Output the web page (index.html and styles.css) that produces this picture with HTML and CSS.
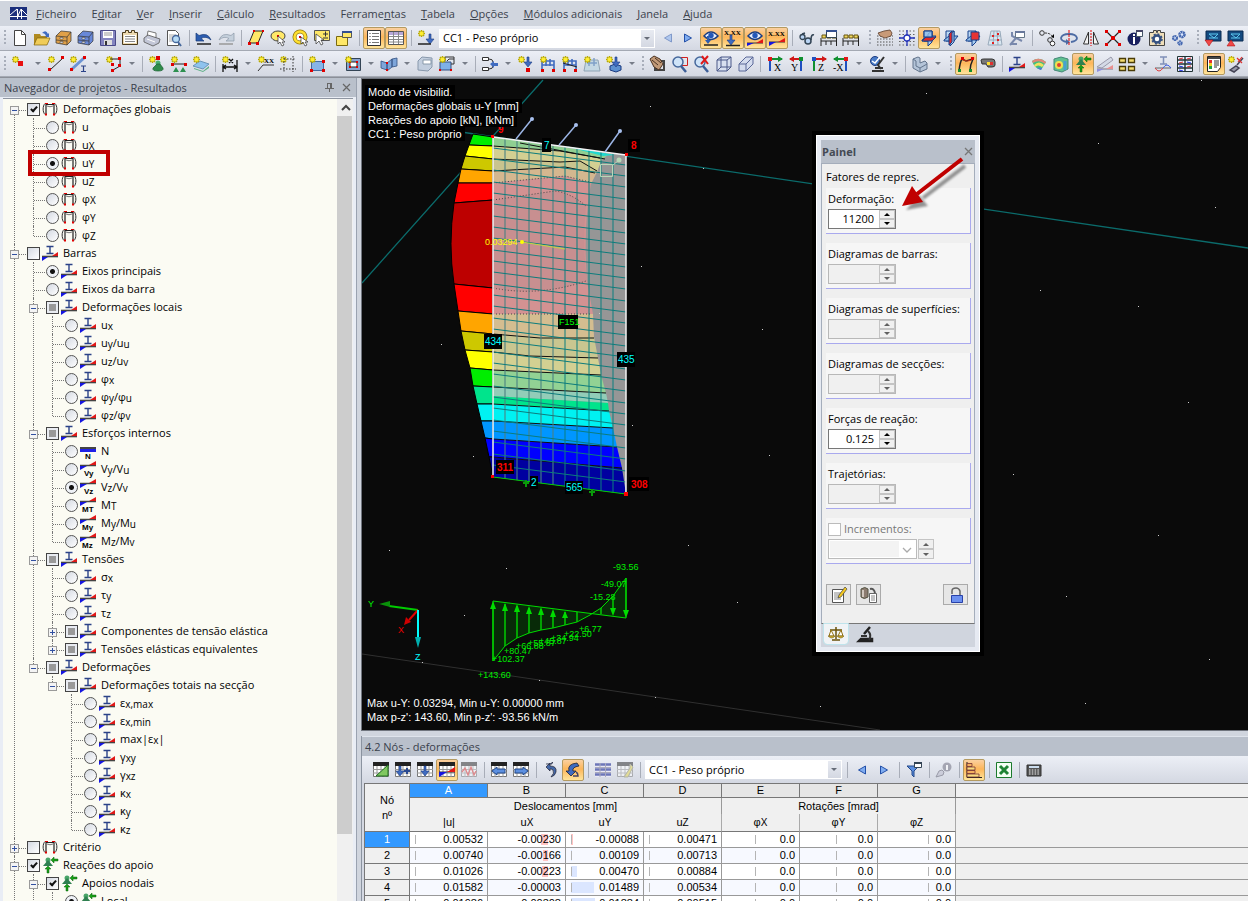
FILE: index.html
```html
<!DOCTYPE html>
<html lang="pt">
<head>
<meta charset="utf-8">
<title>Navegador de projetos - Resultados</title>
<link rel="stylesheet" href="styles.css">
</head>
<body>
<svg class="defs" aria-hidden="true">
<defs>
<g id="star"><path d="M3.500 0v7M0 3.500h7M1 1l5 5M6 1L1 6" stroke="#b8a800" stroke-width="1.500"/><circle cx="3.500" cy="3.500" r="2" fill="#ffee30"/></g>
<g id="down"><path d="M-1 0h2v5h3l-4 5-4-5h3z" fill="#3f6bc0" stroke="#1b3a80" stroke-width=".6"/></g>
<g id="frame"><path d="M4 14V3.500h8V14" fill="none" stroke="#222" stroke-width="1.200"/><path d="M3 2.500C.5 5 .5 11 3 13.500M13 2.500c2.500 2.500 2.500 8.500 0 11" fill="none" stroke="#333"/><path d="M5 5q3 1.500 6 0" fill="none" stroke="#777"/><path d="M3 2h3v1H3zM10 2h3v1h-3zM3 12.500h2v2H3zM11 12.500h2v2h-2z" fill="#e00000"/></g>
<g id="beam"><path d="M4.500 1.500h7M4.500 8.500h7M8 1.500v7" stroke="#2b4288" stroke-width="1.400"/><path d="M0 11.500h16" stroke="#444" stroke-width="1.600"/><path d="M10 11l6-4v4z" fill="#e01818"/><path d="M0 12v4l6-4z" fill="#1515e0"/></g>
<g id="force"><path d="M0 4.500h16" stroke="#444" stroke-width="1.500"/><path d="M9 4l7-4v4z" fill="#e01818"/><path d="M0 5v4l7-4z" fill="#1515e0"/></g>
<g id="supp"><circle cx="6" cy="3" r="2.500" fill="#48a468"/><path d="M6 3l5 6H1z" fill="#2f8050"/><path d="M9 3l3-3v2h4v2h-4v2zM6 9l3 3H7v4H5v-4H3z" fill="#18a018" stroke="#0a600a" stroke-width=".5"/></g>
<g id="grid"><path d="M.5 .5h15v14H.5z" fill="#fff" stroke="#777"/><path d="M0 0h16v4H0z" fill="#222"/><path d="M0 7.500h16M0 11h16M4 4v11M8 4v11M12 4v11" stroke="#999"/></g>
<g id="planes"><path d="M3 1h8v10H3z" fill="#bcd8f4" stroke="#17408c"/><path d="M1 10l5-4h9l-4 5H1z" fill="#8fbde8" stroke="#17408c"/><path d="M7 4l4-3v11l-4 4z" fill="#a8cdf0" stroke="#17408c"/></g>
<g id="cyl"><path d="M0 6l5-5 10 1v9l-4 4-11-2z" fill="currentColor" stroke="#333" stroke-width=".7"/><path d="M0 6l11 1v8M11 7l4-5M0 10l11 1" fill="none" stroke="#333" stroke-width=".7"/><path d="M4 7.500h3v1.500H4zM4 11.500h3V13H4z" fill="#fff" stroke="#333" stroke-width=".5"/></g>
<g id="load"><path d="M2 14V5h12v9M2 9h12M6 3v7M10 3v7" fill="none" stroke="#3f6bc0" stroke-width="1.600"/><path d="M1 13h3v3H1zM12 13h3v3h-3z" fill="#e00000"/></g>
<g id="eye"><path d="M1 6q7-8 14 0-7 7-14 0z" fill="#e8f0ff" stroke="#1d3f80" stroke-width="1.500"/><circle cx="8" cy="5.500" r="2.700" fill="#2458b8"/></g>
<g id="prev"><path d="M11.500 4v8L4.500 8z" fill="#7facf0" stroke="#2350a8"/></g>
<g id="next"><path d="M4.500 4v8l7-4z" fill="#7facf0" stroke="#2350a8"/></g>
<g id="film"><path d="M0 8v8M15.500 6v10M0 11h16M5 11v4M10 11v4" stroke="#222"/><path d="M1 5h4v3H1zM6 5h4v3H6zM11 5h4v3h-4z" fill="#f0d860" stroke="#665510"/></g>
</defs>
</svg>

<nav class="menubar">
<svg class="logo" aria-hidden="true"><path d="M0 0h17v13H0z" fill="#1c2f7c"/><path d="M0 9.500h17M7.500 2v10M11.500 2v10M0 8l7-6 1 7M8 9l3-7 6 6" fill="none" stroke="#fff"/></svg>
<a href="#"><u>F</u>icheiro</a><a href="#">E<u>d</u>itar</a><a href="#"><u>V</u>er</a><a href="#"><u>I</u>nserir</a><a href="#"><u>C</u>álculo</a><a href="#"><u>R</u>esultados</a><a href="#">Ferrame<u>n</u>tas</a><a href="#"><u>T</u>abela</a><a href="#"><u>O</u>pções</a><a href="#"><u>M</u>ódulos adicionais</a><a href="#"><u>J</u>anela</a><a href="#"><u>A</u>juda</a>
</nav>

<div class="toolrow wide">
<div class="bar">
<button class="t" aria-label="Novo"><svg><path d="M2.500 .5h7l4 4v11h-11z" fill="#fff" stroke="#444"/><path d="M9.500 .5v4h4" fill="none" stroke="#444"/></svg></button>
<button class="t" aria-label="Abrir"><svg><path d="M0 15V4h6l1 2h6v9z" fill="#b08a20"/><path d="M0 15l3-7h13l-3 7z" fill="#f0cc58" stroke="#80620c" stroke-width=".7"/><path d="M8 3q4-4 6 1l1-1v4h-4l1-1q-1-3-4-3z" fill="#3f6bc0"/></svg></button>
<button class="t" aria-label="Projetos"><svg style="color:#e0a048"><use href="#cyl"/></svg></button>
<button class="t" aria-label="Blocos"><svg style="color:#6888d8"><use href="#cyl"/></svg></button>
<button class="t" aria-label="Guardar"><svg><path d="M.5 .5h15v15H.5z" fill="#8485c0" stroke="#4a4a88"/><path d="M3 1h10v7H3z" fill="#fff"/><path d="M4 3h8M4 5h8" stroke="#999"/><path d="M4 10h8v5H4z" fill="#ddd"/><path d="M5 11h2v4H5z" fill="#333"/></svg></button>
<button class="t" aria-label="Relatório"><svg><path d="M.5 2.500h3v-2h3v2h3v-2h3v2h3v12H.5z" fill="#ecd9b0" stroke="#4a3a1c"/><path d="M2 5h12v8H2z" fill="#fff"/><path d="M3 6.500h10M3 9h10M3 11.500h10" stroke="#888"/></svg></button>
<button class="t" aria-label="Imprimir"><svg><path d="M3 7l1-6 8 2v5z" fill="#fff" stroke="#777"/><path d="M0 8l4-3 12 4-1 4-6 3-9-4z" fill="#c2c6d6" stroke="#555" stroke-width=".8"/><path d="M3 9l8 3" stroke="#fff"/></svg></button>
<button class="t" aria-label="Pré-visualizar"><svg><path d="M1.500 .5h8l3 3v12h-11z" fill="#fff" stroke="#555"/><path d="M3 5h7M3 7h7M3 9h4M3 11h4" stroke="#aaa"/><circle cx="10" cy="9" r="3.500" fill="#b8dcf6" stroke="#46689c" stroke-width="1.300"/><path d="M12 12l3 4" stroke="#46689c" stroke-width="2"/></svg></button>
<i class="sep"></i>
<button class="t" aria-label="Anular"><svg><path d="M0 3v8h8L5 8.500q5-3 10 1.500Q12 2 3 5.500z" fill="#2c5db0" stroke="#173a78" stroke-width=".7"/><path d="M1 14h14" stroke="#222" stroke-width="1.500"/></svg></button>
<button class="t" aria-label="Refazer"><svg><path d="M16 3v8H8l3-2.500Q6 5.500 1 10 4 2 13 5.500z" fill="#c5d0dc" stroke="#8b98a8" stroke-width=".7"/><path d="M1 14h14" stroke="#999" stroke-width="1.500"/></svg></button>
<i class="sep"></i>
<button class="t" aria-label="Polígono"><svg><path d="M6 1h9l-5 12H1z" fill="#ffe868" stroke="#222"/><path d="M5 0h2v2H5zM14 0h2v2h-2zM0 12h3v3H0zM8 12h3v3H8z" fill="#e00000"/></svg></button>
<button class="t" aria-label="Elipse"><svg><ellipse cx="8" cy="6" rx="7" ry="5" fill="#ffe868" stroke="#444"/><path d="M7 5h2v2H7z" fill="#e00000"/><path d="M8 6v8l2-2 2 4 2-1-2-3h3z" fill="#fff" stroke="#333" stroke-width=".7"/></svg></button>
<button class="t" aria-label="Anel"><svg><circle cx="8" cy="7" r="5.500" fill="#fff" stroke="#907810" stroke-width="4"/><circle cx="8" cy="7" r="5.500" fill="none" stroke="#ffe030" stroke-width="2.500"/><path d="M7 6h2v2H7z" fill="#e00000"/><path d="M9 7v7l2-2 2 4 2-1-2-3h3z" fill="#fff" stroke="#333" stroke-width=".7"/></svg></button>
<button class="t" aria-label="Seleção"><svg><path d="M.5 .5h15v10H.5z" fill="#ffe868" stroke="#555"/><path d="M9 4h5M11.500 1.500v5M9 8h5" stroke="#333"/><path d="M2 4v10l3-3 2 4 2-1-2-4h3z" fill="#fff" stroke="#333" stroke-width=".7"/></svg></button>
<button class="t" aria-label="Nova janela"><svg><path d="M.5 6.500h11v9H.5z" fill="#ffe868" stroke="#7a6a10"/><path d="M6.500 1.500h9v6h-9z" fill="#ffe868" stroke="#555"/><path d="M6 1h10v2H6z" fill="#334f90"/></svg></button>
<i class="sep"></i>
<button class="t on" aria-label="Navegador"><svg><path d="M1.500 .5h13v15h-13z" fill="#fff" stroke="#333"/><path d="M6 3.500h7M6 6.500h7M6 9.500h7M6 12.500h7" stroke="#777"/><path d="M4 3v11" stroke="#333" stroke-dasharray="1 2"/></svg></button>
<button class="t on" aria-label="Tabelas"><svg><path d="M.5 1.500h15v13H.5z" fill="#fff" stroke="#555"/><path d="M1 2h14v3H1z" fill="#b8a8d8"/><path d="M1 6.500h14M1 9.500h14M1 12h14M5.500 2v12M10.500 2v12" stroke="#888"/></svg></button>
<i class="sep"></i>
<button class="t" aria-label="Novo caso de carga"><svg><use href="#star"/><use href="#down" x="12" y="4"/><path d="M0 14h13" stroke="#222" stroke-width="1.500"/></svg></button>
<span class="combo top"><select aria-label="Caso de carga"><option>CC1 - Peso próprio</option></select></span>
<button class="t slim faded" aria-label="Anterior"><svg><use href="#prev"/></svg></button>
<button class="t slim" aria-label="Seguinte"><svg><use href="#next"/></svg></button>
<i class="gap2"></i>
<button class="t on" aria-label="Mostrar cargas"><svg><use href="#eye"/><path d="M4 6v4H2l3 4 3-4H6V6" fill="#2c5db0"/><path d="M1 15h14" stroke="#222" stroke-width="1.500"/></svg></button>
<button class="t on" aria-label="Valores das cargas"><svg><text x="-1" y="5" class="ti">X.XX</text><use href="#down" x="6" y="5"/><path d="M1 15.500h14" stroke="#222" stroke-width="1.500"/></svg></button>
<button class="t on" aria-label="Mostrar resultados"><svg><use href="#eye"/><path d="M0 13h16" stroke="#333"/><path d="M9 13l7-4v4z" fill="#e01818"/><path d="M0 13v3l7-3z" fill="#1515e0"/></svg></button>
<button class="t on" aria-label="Valores dos resultados"><svg><text x="-1" y="6" class="ti">X.XX</text><path d="M0 12h16" stroke="#333"/><path d="M9 12l7-4v4z" fill="#e01818"/><path d="M0 12v4l7-4z" fill="#1515e0"/></svg></button>
<i class="sep"></i>
<button class="t" aria-label="Vista"><svg><circle cx="3.500" cy="7" r="2.500" fill="#b9d4f4" stroke="#345" stroke-width="1.300"/><circle cx="9" cy="11" r="3" fill="#b9d4f4" stroke="#345" stroke-width="1.500"/><path d="M3 4l3-1M12 10q0-6 3-5" fill="none" stroke="#345" stroke-width="1.500"/></svg></button>
<button class="t" aria-label="Animação"><svg><use href="#film"/><path d="M5.500 .5h10v7h-10z" fill="#fff" stroke="#345"/><path d="M5 0h11v2H5z" fill="#334f90"/></svg></button>
<button class="t" aria-label="Filme"><svg><use href="#film"/></svg></button>
</div>
<div class="bar">
<button class="t" aria-label="Grelha"><svg><path d="M0 6h16M0 9h16M0 12h16M0 15h16" stroke="#555" stroke-width="1.200" stroke-dasharray="1.500 1.500"/><path d="M1 3l6-2 6-1 2 3-1 3-6 2-5-2z" fill="#c89a78" stroke="#5b3c2a" stroke-width=".8"/></svg></button>
<button class="t" aria-label="Captura"><svg><path d="M0 1h16M0 4.500h16M0 8h16M0 11.500h16M0 15h16" stroke="#666" stroke-width="1.200" stroke-dasharray="1.500 2"/><path d="M8 0v16M0 8h16" stroke="#2233bb" stroke-width="1.300"/><circle cx="8" cy="8" r="3" fill="#fff" stroke="#2233bb" stroke-width="1.300"/></svg></button>
<button class="t on" aria-label="Plano XY"><svg><use href="#planes"/><path d="M1 11l4-4h10l-4 4z" fill="#e02828" stroke="#17408c"/><path d="M3 1h8v6H3z" fill="#8fbde8" fill-opacity=".8" stroke="#17408c"/></svg></button>
<button class="t" aria-label="Plano YZ"><svg><use href="#planes"/><path d="M6 4l3-3v11l-3 3z" fill="#e02828" stroke="#17408c"/></svg></button>
<button class="t" aria-label="Plano XZ"><svg><use href="#planes"/><path d="M6 2h8v8H6z" fill="#e83434" stroke="#17408c"/></svg></button>
<button class="t" aria-label="Malha"><svg><path d="M4 1h9l2 14H1zM3 6h11M2 10h13M7 1L6 15M10 1l1 14" fill="#d8e6f0" stroke="#9ab"/><path d="M5 5h2v2H5zM10 9h2v2h-2zM5 12h2v2H5zM10 3h2v2h-2z" fill="#e02020"/></svg></button>
<button class="t" aria-label="Ferramentas"><svg><path d="M1 15l6-7-4-2V2M7 8l6 3M2 14h6" fill="none" stroke="#7888ac" stroke-width="2"/><path d="M6.500 1.500h9v6h-9z" fill="#fff" stroke="#678"/><path d="M6 1h10v2H6z" fill="#68789c"/></svg></button>
<i class="sep"></i>
<button class="t" aria-label="Mover"><svg><circle cx="3" cy="3" r="2.300" fill="none" stroke="#333"/><circle cx="11" cy="10" r="2.300" fill="none" stroke="#333"/><circle cx="13.500" cy="13.500" r="2.300" fill="#fff" stroke="#333"/><path d="M6 3q5 0 7 3" fill="none" stroke="#333" stroke-dasharray="2 1"/><path d="M15 8V4l-3 3z"/></svg></button>
<button class="t" aria-label="Rodar"><svg><path d="M6 12q-6-1-6-4 1-4 8-4t8 4q0 3-6 4" fill="none" stroke="#4d6ca4" stroke-width="1.800"/><path d="M5 9v6l4-3z" fill="#4d6ca4"/><path d="M8 0v16" stroke="#e00000" stroke-dasharray="3 1"/></svg></button>
<button class="t" aria-label="Espelhar"><svg><path d="M5.500 2v12H.5zM10.500 2v12h5z" fill="#f4f4f4" stroke="#333"/><path d="M8 0v16" stroke="#e00000" stroke-dasharray="2 1"/></svg></button>
<button class="t" aria-label="Dividir"><svg><path d="M1 1l14 14M15 1L1 15" stroke="#222" stroke-width="1.200"/><path d="M0 0h3v3H0zM13 0h3v3h-3zM0 13h3v3H0zM13 13h3v3h-3zM6 6h4v4H6z" fill="#e00000"/></svg></button>
<button class="t" aria-label="Informação"><svg><circle cx="7" cy="9" r="6.500" fill="#182060"/><path d="M6 7h2v7H6zM6 4h2v2H6z" fill="#fff"/><path d="M9.500 .5h6v6h-6z" fill="#fff" stroke="#456"/><path d="M9 0h7v2H9z" fill="#446"/></svg></button>
<button class="t" aria-label="Opções"><svg><path d="M.5 2.500h4v-2h3v2h1v-2h3v2h4v13H.5z" fill="#f0dfba" stroke="#444"/><circle cx="8" cy="9" r="3.500" fill="#fff" stroke="#345080" stroke-width="2.500"/><circle cx="8" cy="9" r="5" fill="none" stroke="#345080" stroke-width="1.500" stroke-dasharray="2 1.900"/></svg></button>
<button class="t" aria-label="Parâmetros"><svg><circle cx="11" cy="4.500" r="2.500" fill="#dce8ff" stroke="#4568b0" stroke-width="2.600" stroke-dasharray="2 .5"/><circle cx="4" cy="8" r="2" fill="#dce8ff" stroke="#4568b0" stroke-width="2.200" stroke-dasharray="1.600 .4"/><circle cx="9" cy="13" r="1.600" fill="#dce8ff" stroke="#4568b0" stroke-width="2.200" stroke-dasharray="1.600 .4"/></svg></button>
</div>
<div class="bar last">
<button class="t" aria-label="Módulo A"><svg><path d="M1 1h15v10H1z" fill="#144a80" stroke="#0a2a50"/><path d="M4 4h9M4 8h9M4 4l5 4 4-4" fill="none" stroke="#5cc8f0"/><path d="M0 10h8l-4 6z" fill="#f04848" stroke="#a00" stroke-width=".5"/></svg></button>
<button class="t" aria-label="Módulo B"><svg><path d="M1 1h15v10H1z" fill="#144a80" stroke="#0a2a50"/><path d="M4 4h9M4 8h9M4 4l5 4 4-4" fill="none" stroke="#5cc8f0"/><path d="M0 16h8l-4-6z" fill="#f04848" stroke="#a00" stroke-width=".5"/></svg></button>
</div>
</div>

<div class="toolrow">
<div class="bar">
<button class="t" aria-label="Novo nó"><svg><use href="#star"/><path d="M6 5h5v5H6z" fill="#e81010"/></svg></button><button class="c" aria-label="Mais"></button>
<button class="t" aria-label="Nova linha"><svg><use href="#star"/><path d="M2 14L15 2" stroke="#222"/><path d="M0 12h3v3H0zM13 0h3v3h-3z" fill="#e00000"/></svg></button>
<button class="t" aria-label="Nova barra"><svg><path d="M2 13L14 2" stroke="#6c94d4" stroke-width="3"/><use href="#star"/><path d="M0 12h3v3H0zM13 0h3v3h-3z" fill="#e00000"/><path d="M11 10h5M11 15.500h5M13.500 10v6" stroke="#2b4288" stroke-width="1.200"/></svg></button><button class="c" aria-label="Mais"></button>
<button class="t" aria-label="Polilinha"><svg><use href="#star"/><path d="M4 3h10v7L7 14" fill="none" stroke="#222"/><path d="M12 1h3v3h-3zM12 8h3v3h-3zM5 13h3v3H5zM5 7h3v3H5z" fill="#e00000"/></svg></button><button class="c" aria-label="Mais"></button>
<i class="sep"></i>
<button class="t" aria-label="Apoio nodal"><svg><use href="#star"/><path d="M7 0h4v4H7z" fill="#e00000"/><circle cx="9" cy="7" r="2.500" fill="#48b070"/><path d="M8 8h3l3 4q1 3-5 3t-5-3z" fill="#2e8b4a" stroke="#1a6030" stroke-width=".7"/></svg></button>
<button class="t" aria-label="Apoio linear"><svg><use href="#star"/><path d="M1 8h14" stroke="#222"/><path d="M0 7h3v3H0zM13 7h3v3h-3z" fill="#e00000"/><path d="M5 11l3 5H2zM12 11l3 5H9z" fill="#2e9050"/></svg></button>
<button class="t" aria-label="Apoio superfície"><svg><path d="M1 12l9 3 6-5v2l-6 4-9-3z" fill="#60b088"/><path d="M0 10l7-5 9 3-6 5z" fill="#8fc3ee" stroke="#6a94b8"/><use href="#star"/></svg></button>
<i class="sep"></i>
<button class="t" aria-label="Cota"><svg><use href="#star"/><path d="M1 8v8M15 4v12M1 11h14M4 9l-3 2 3 2M12 9l3 2-3 2M7 3l4 4M11 3L7 7" fill="none" stroke="#111" stroke-width="1.300"/></svg></button><button class="c" aria-label="Mais"></button>
<button class="t" aria-label="Comentário"><svg><use href="#star"/><path d="M0 15l5-6h11" fill="none" stroke="#333"/><text x="6" y="7" class="ti">XX</text></svg></button>
<button class="t" aria-label="Linhas de guia"><svg><use href="#star"/><path d="M4 2v14M13 0v16M4 3h12M0 13h16" stroke="#333" stroke-dasharray="1.500 1.500"/></svg></button>
<i class="sep"></i>
<button class="t" aria-label="Superfície"><svg><path d="M2.500 5.500h12v9h-12z" fill="#88b4e8" stroke="#456ca0"/><use href="#star"/><path d="M1 13h3v3H1zM13 13h3v3h-3zM13 4h3v3h-3z" fill="#e00000"/></svg></button><button class="c" aria-label="Mais"></button>
<button class="t" aria-label="Abertura"><svg><path d="M1.500 2.500h14v12h-14z" fill="#88a4d0" stroke="#345"/><path d="M5 6h7v5H5z" fill="#fff" stroke="#222"/><path d="M4 5h2v2H4zM11 5h2v2h-2zM4 10h2v2H4zM11 10h2v2h-2z" fill="#e00000"/><use href="#star"/></svg></button><button class="c" aria-label="Mais"></button>
<button class="t" aria-label="Interseção"><svg><path d="M0 5l6 2v7l-6-2zM6 7l5-4v8l-5 4zM11 3l5-1v8l-5 1z" fill="#7ea6da" stroke="#345080" stroke-width=".8"/><path d="M5 6h2v2H5zM5 13h2v2H5z" fill="#e00000"/></svg></button><button class="c" aria-label="Mais"></button>
<button class="t" aria-label="Sólido"><svg><path d="M1 5l4-4 10 1v9l-4 4-10-1z" fill="#c2cede" stroke="#8898ac"/><path d="M6 4h8v4H6z" fill="#fff" stroke="#89a"/></svg></button>
<button class="t" aria-label="Conjunto"><svg><path d="M1 6h11v8H1z" fill="#7fb0e6" stroke="#345080"/><path d="M6 5V1h9v7h-3" fill="none" stroke="#333"/><path d="M8 5l2-2h5" fill="none" stroke="#333"/><path d="M0 13h2v2H0zM11 13h2v2h-2z" fill="#e00000"/><use href="#star"/></svg></button><button class="c" aria-label="Mais"></button>
<i class="sep"></i>
<button class="t" aria-label="Ligação"><svg><path d="M.5 1.500h6v3h-6zM.5 11.500h6v3h-6z" fill="#fff" stroke="#333"/><path d="M7 3q4 0 4 3M7 13q4 0 4-3" fill="none" stroke="#333"/><path d="M8 8l4-3v2h4v3h-4v2z" fill="#3f6bc0"/></svg></button><button class="c" aria-label="Mais"></button>
<button class="t" aria-label="Carga nodal"><svg><use href="#star"/><use href="#down" x="10" y="1"/><path d="M8 12h4v4H8z" fill="#e00000"/></svg></button>
<button class="t" aria-label="Carga de barra"><svg><use href="#load"/><use href="#star"/></svg></button>
<button class="t" aria-label="Carga de linha"><svg><use href="#load"/><use href="#star"/><path d="M1 7l14 4" stroke="#222"/></svg></button>
<button class="t" aria-label="Carga de superfície"><svg><path d="M2 4h12l2 11H0z" fill="#c4d8e4" stroke="#90a4b4"/><path d="M5 2v8M10 2v8M3 7h10" stroke="#7fa0c8" stroke-width="1.500"/><use href="#star"/></svg></button>
<button class="t" aria-label="Carga livre"><svg><use href="#star"/><path d="M4 10l5-2 6 2v4l-5 2-6-2z" fill="#5c90d0" stroke="#1b3a80"/><use href="#down" x="10" y="1"/></svg></button><button class="c" aria-label="Mais"></button>
</div>
<div class="bar tight">
<button class="t" aria-label="Mover vista"><svg><path d="M5 5h9v9H5z" fill="none" stroke="#444" stroke-width="2"/><path d="M0 3l4-3 6 3 3 5-4 6-5-3z" fill="#c29a78" stroke="#4a3222"/><path d="M2 4l6 5M5 2l6 5" stroke="#4a3222"/></svg></button>
<button class="t" aria-label="Ampliar janela"><svg><path d="M6.500 1.500h9v8h-9z" fill="none" stroke="#d02020"/><circle cx="6" cy="6" r="5" fill="#cfe4f8" stroke="#46689c" stroke-width="1.500"/><path d="M9 10l5 6" stroke="#3c5e98" stroke-width="2.500"/></svg></button>
<button class="t" aria-label="Ver tudo"><svg><circle cx="6" cy="6" r="5" fill="#cfe4f8" stroke="#46689c" stroke-width="1.500"/><path d="M9 10l5 6" stroke="#3c5e98" stroke-width="2.500"/><path d="M8 0l6 8M14 0L7 8" stroke="#e01818" stroke-width="2"/></svg></button>
<button class="t" aria-label="Perspetiva"><svg><path d="M1 4l4-3h10v10l-4 4H1z" fill="#d8e0f0"/><path d="M1 4l4-3h10v10l-4 4H1zM1 4h10v11M11 4l4-3M5 1v10h10M5 11l-4 4" fill="none" stroke="#4a5888"/></svg></button>
<button class="t" aria-label="Isometria"><svg><path d="M1 8h7v7H1zM1 8l7-7h7v7l-7 7M8 8l7-7" fill="#d4dcee" stroke="#5a6898"/></svg></button>
<i class="sep"></i>
<button class="t" aria-label="Vista X"><svg><path d="M3 3v12" stroke="#2050c0" stroke-width="2"/><path d="M3 3h12" stroke="#109030" stroke-width="2"/><path d="M11 0l5 3-5 3z" fill="#109030"/><path d="M1 1h4v4H1z" fill="#e01818"/><text x="7" y="15" class="ax">X</text></svg></button>
<button class="t" aria-label="Vista Y"><svg><path d="M12 3v12" stroke="#2050c0" stroke-width="2"/><path d="M1 3h11" stroke="#d01818" stroke-width="2"/><path d="M5 0L0 3l5 3z" fill="#d01818"/><path d="M10 1h4v4h-4z" fill="#109030"/><text x="2" y="15" class="ax">Y</text></svg></button>
<button class="t" aria-label="Vista Z"><svg><path d="M3 3v12" stroke="#109030" stroke-width="2"/><path d="M3 3h12" stroke="#d01818" stroke-width="2"/><path d="M11 0l5 3-5 3z" fill="#d01818"/><path d="M1 1h4v4H1z" fill="#2050c0"/><text x="7" y="15" class="ax">Z</text></svg></button>
<button class="t" aria-label="Vista -X"><svg><path d="M13 3v12" stroke="#2050c0" stroke-width="2"/><path d="M1 3h12" stroke="#109030" stroke-width="2"/><path d="M5 0L0 3l5 3z" fill="#109030"/><path d="M11 1h4v4h-4z" fill="#e01818"/><text x="0" y="15" class="ax">-X</text></svg></button><button class="c" aria-label="Mais"></button>
<button class="t" aria-label="Visibilidade"><svg><circle cx="6" cy="5" r="4.500" fill="#4a7cc8" stroke="#1b3a80"/><path d="M3 5l3 2 5-6" fill="none" stroke="#fff" stroke-width="1.500"/><path d="M15 1L9 9l3 4M3 15h12M6 12h8" fill="none" stroke="#333" stroke-width="2"/></svg></button><button class="c" aria-label="Mais"></button>
<i class="sep"></i>
<button class="t" aria-label="Modelo"><svg><path d="M1 3l5-2 2 1v5l5-2 2 2v6l-7 3-7-4z" fill="#b4c4d8" stroke="#62748c"/><path d="M1 3l3 2v5l4 2 7-4M8 12v4" fill="none" stroke="#62748c"/></svg></button><button class="c" aria-label="Mais"></button>
</div>
<div class="bar last">
<button class="t on" aria-label="Deformação"><svg><path d="M1 15Q2 6 4 3l4 2 7-2q-3 6-3 12" fill="none" stroke="#222" stroke-width="1.500"/><path d="M4 3q5 4 11 0" fill="none" stroke="#d03010"/><path d="M0 13h3v3H0zM11 13h3v3h-3z" fill="#109030"/><path d="M3 1h3v3H3zM13 1h3v3h-3z" fill="#e00000"/></svg></button>
<button class="t" aria-label="Animar"><svg><path d="M1 4q0-1 3-1h8q3 0 3 3v3q0 2-3 2H8L6 8H2z" fill="#777" stroke="#333"/><path d="M7 6h6v3H7z" fill="#ffe030"/><path d="M10 6h3v3h-3z" fill="#e03030"/></svg></button>
<i class="sep"></i>
<button class="t" aria-label="Barras"><svg><use href="#beam"/></svg></button>
<button class="t" aria-label="Superfícies"><svg><path d="M1 5q7-5 14 1l-5 8q-7-2-9-9z" fill="#40c080"/><path d="M1 5q7-5 14 1l-1 2Q8 3 2 7z" fill="#e08878"/><path d="M3 9q5-5 10 0l-2 2q-4-3-7 0z" fill="#f0e060"/><path d="M6 12q2-1 5 0l-1 2z" fill="#5070e0"/></svg></button>
<button class="t" aria-label="Sólidos"><svg><path d="M1 3l7-2 7 2v10l-6 3-8-2z" fill="#60c090" stroke="#487"/><circle cx="6" cy="9" r="4" fill="#f0e050"/><circle cx="6" cy="9" r="2" fill="#e04030"/><path d="M12 5v9" stroke="#48a0d0" stroke-width="3"/></svg></button>
<button class="t on" aria-label="Reações"><svg><use href="#supp"/></svg></button>
<button class="t" aria-label="Secções"><svg><path d="M0 11L14 1l2 3L5 12z" fill="#d4dae6" stroke="#99a"/><path d="M0 13h16" stroke="#778"/><path d="M9 13l7-4v4z" fill="#e89090"/><path d="M0 13v3l7-3z" fill="#9090e0"/></svg></button>
<button class="t" aria-label="Disposição"><svg><path d="M.5 2.500h6v4h-6zM9.500 2.500h6v4h-6zM.5 10.500h6v4h-6zM9.500 10.500h6v4h-6z" fill="#f4dc70" stroke="#4a3c08" stroke-width="1.300"/></svg></button><button class="c" aria-label="Mais"></button>
<button class="t" aria-label="Linha de influência"><svg><path d="M5 1h7M5 8h7M8.500 1v7" stroke="#8090b8" stroke-width="1.500"/><path d="M0 12h16" stroke="#666"/><path d="M0 12q4 6 8 0" fill="none" stroke="#e04040"/><path d="M8 12q4-6 8 0" fill="none" stroke="#4060e0"/></svg></button>
<button class="t" aria-label="Diagramas"><svg><path d="M.5 .5h15v15H.5z" fill="#e8eeff" stroke="#233"/><path d="M0 4h16M0 8h16M0 12h16M8 0v16" stroke="#233" stroke-width="1.400"/><path d="M2 3l4-1M10 3l4-1M2 7l4-1M10 11l4-1" stroke="#e03030"/><path d="M2 10l4 1M10 6l4 1M2 14l4 1" stroke="#2030e0"/></svg></button>
<i class="sep"></i>
<button class="t on" aria-label="Painel de controlo"><svg><path d="M1.500 .5h13v11l-3 4h-10z" fill="#fff" stroke="#222"/><path d="M2 1h12v2H2z" fill="#444"/><path d="M3 4h3v3H3z" fill="#e03030"/><path d="M3 7h3v3H3z" fill="#f0d020"/><path d="M3 10h3v3H3z" fill="#20a040"/><path d="M8 5h5M8 7h5M8 9h5M8 11h3" stroke="#333"/></svg></button>
<button class="t" aria-label="Configurar"><svg><use href="#star"/><path d="M2 14l6-4 3 2-5 4zM9 9l6-7" fill="#99a" stroke="#445" stroke-width="1.500"/><path d="M9 2l5 5M14 1l-4 5" stroke="#e03030" stroke-width="1.200"/></svg></button>
</div>
</div>

<main class="work">
<section class="navigator">
<header class="title"><h2>Navegador de projetos - Resultados</h2>
<button class="plain" aria-label="Fixar"><svg class="s9"><path d="M2.500 0v5M6.500 0v5M2 .5h5M0 5.500h9M4.500 5v4M5.500 0v5" fill="none" stroke="#666"/></svg></button>
<button class="plain" aria-label="Fechar"><svg class="s9"><path d="M1 1l7 7M8 1L1 8" stroke="#666" stroke-width="1.200"/></svg></button></header>
<div class="treebox">
<ul class="tree root">
<li><div class="row"><button class="tg" aria-label="Recolher"></button><label><input type="checkbox" checked><svg><use href="#frame"/></svg>Deformações globais</label></div>
<ul class="tree">
<li><div class="row"><label><input type="radio" name="g"><svg><use href="#frame"/></svg>u</label></div></li>
<li><div class="row"><label><input type="radio" name="g"><svg><use href="#frame"/></svg>u<sub>X</sub></label></div></li>
<li class="marked"><div class="row"><label><input type="radio" name="g" checked><svg><use href="#frame"/></svg>u<sub>Y</sub></label></div></li>
<li><div class="row"><label><input type="radio" name="g"><svg><use href="#frame"/></svg>u<sub>Z</sub></label></div></li>
<li><div class="row"><label><input type="radio" name="g"><svg><use href="#frame"/></svg>φ<sub>X</sub></label></div></li>
<li><div class="row"><label><input type="radio" name="g"><svg><use href="#frame"/></svg>φ<sub>Y</sub></label></div></li>
<li><div class="row"><label><input type="radio" name="g"><svg><use href="#frame"/></svg>φ<sub>Z</sub></label></div></li>
</ul></li>
<li><div class="row"><button class="tg" aria-label="Recolher"></button><label><input type="checkbox"><svg><use href="#beam"/></svg>Barras</label></div>
<ul class="tree">
<li><div class="row"><label><input type="radio" name="b" checked><svg><use href="#beam"/></svg>Eixos principais</label></div></li>
<li><div class="row"><label><input type="radio" name="b"><svg><use href="#beam"/></svg>Eixos da barra</label></div></li>
<li><div class="row"><button class="tg" aria-label="Recolher"></button><label><input type="checkbox" class="mixed"><svg><use href="#beam"/></svg>Deformações locais</label></div>
<ul class="tree">
<li><div class="row"><label><input type="radio" name="i"><svg><use href="#beam"/></svg>u<sub>x</sub></label></div></li>
<li><div class="row"><label><input type="radio" name="i"><svg><use href="#beam"/></svg>u<sub>y</sub>/u<sub>u</sub></label></div></li>
<li><div class="row"><label><input type="radio" name="i"><svg><use href="#beam"/></svg>u<sub>z</sub>/u<sub>v</sub></label></div></li>
<li><div class="row"><label><input type="radio" name="i"><svg><use href="#beam"/></svg>φ<sub>x</sub></label></div></li>
<li><div class="row"><label><input type="radio" name="i"><svg><use href="#beam"/></svg>φ<sub>y</sub>/φ<sub>u</sub></label></div></li>
<li><div class="row"><label><input type="radio" name="i"><svg><use href="#beam"/></svg>φ<sub>z</sub>/φ<sub>v</sub></label></div></li>
</ul></li>
<li><div class="row"><button class="tg" aria-label="Recolher"></button><label><input type="checkbox" class="mixed"><svg><use href="#beam"/></svg>Esforços internos</label></div>
<ul class="tree">
<li><div class="row"><label><input type="radio" name="i"><svg><path d="M0 4h16v2H0z" fill="#444"/><path d="M0 6h16v3H0z" fill="#2020e8"/><text x="5" y="16" class="tn">N</text></svg>N</label></div></li>
<li><div class="row"><label><input type="radio" name="i"><svg><use href="#force"/><text x="4" y="15" class="tn">Vy</text></svg>V<sub>y</sub>/V<sub>u</sub></label></div></li>
<li><div class="row"><label><input type="radio" name="i" checked><svg><use href="#force"/><text x="4" y="15" class="tn">Vz</text></svg>V<sub>z</sub>/V<sub>v</sub></label></div></li>
<li><div class="row"><label><input type="radio" name="i"><svg><use href="#force"/><text x="2" y="15" class="tn">MT</text></svg>M<sub>T</sub></label></div></li>
<li><div class="row"><label><input type="radio" name="i"><svg><use href="#force"/><text x="2" y="15" class="tn">My</text></svg>M<sub>y</sub>/M<sub>u</sub></label></div></li>
<li><div class="row"><label><input type="radio" name="i"><svg><use href="#force"/><text x="2" y="15" class="tn">Mz</text></svg>M<sub>z</sub>/M<sub>v</sub></label></div></li>
</ul></li>
<li><div class="row"><button class="tg" aria-label="Recolher"></button><label><input type="checkbox" class="mixed"><svg><use href="#beam"/></svg>Tensões</label></div>
<ul class="tree">
<li><div class="row"><label><input type="radio" name="i"><svg><use href="#beam"/></svg>σ<sub>x</sub></label></div></li>
<li><div class="row"><label><input type="radio" name="i"><svg><use href="#beam"/></svg>τ<sub>y</sub></label></div></li>
<li><div class="row"><label><input type="radio" name="i"><svg><use href="#beam"/></svg>τ<sub>z</sub></label></div></li>
<li><div class="row"><button class="tg plus" aria-label="Expandir"></button><label><input type="checkbox" class="mixed"><svg><use href="#beam"/></svg>Componentes de tensão elástica</label></div></li>
<li><div class="row"><button class="tg plus" aria-label="Expandir"></button><label><input type="checkbox" class="mixed"><svg><use href="#beam"/></svg>Tensões elásticas equivalentes</label></div></li>
</ul></li>
<li><div class="row"><button class="tg" aria-label="Recolher"></button><label><input type="checkbox" class="mixed"><svg><use href="#beam"/></svg>Deformações</label></div>
<ul class="tree">
<li><div class="row"><button class="tg" aria-label="Recolher"></button><label><input type="checkbox" class="mixed"><svg><use href="#beam"/></svg>Deformações totais na secção</label></div>
<ul class="tree">
<li><div class="row"><label><input type="radio" name="i"><svg><use href="#beam"/></svg>ε<sub>x,max</sub></label></div></li>
<li><div class="row"><label><input type="radio" name="i"><svg><use href="#beam"/></svg>ε<sub>x,min</sub></label></div></li>
<li><div class="row"><label><input type="radio" name="i"><svg><use href="#beam"/></svg>max|ε<sub>x</sub>|</label></div></li>
<li><div class="row"><label><input type="radio" name="i"><svg><use href="#beam"/></svg>γ<sub>xy</sub></label></div></li>
<li><div class="row"><label><input type="radio" name="i"><svg><use href="#beam"/></svg>γ<sub>xz</sub></label></div></li>
<li><div class="row"><label><input type="radio" name="i"><svg><use href="#beam"/></svg>κ<sub>x</sub></label></div></li>
<li><div class="row"><label><input type="radio" name="i"><svg><use href="#beam"/></svg>κ<sub>y</sub></label></div></li>
<li><div class="row"><label><input type="radio" name="i"><svg><use href="#beam"/></svg>κ<sub>z</sub></label></div></li>
</ul></li>
</ul></li>
</ul></li>
<li><div class="row"><button class="tg plus" aria-label="Expandir"></button><label><input type="checkbox"><svg><use href="#frame"/></svg>Critério</label></div></li>
<li class="more"><div class="row"><button class="tg" aria-label="Recolher"></button><label><input type="checkbox" checked><svg><use href="#supp"/></svg>Reações do apoio</label></div>
<ul class="tree">
<li class="more"><div class="row"><button class="tg" aria-label="Recolher"></button><label><input type="checkbox" checked><svg><use href="#supp"/></svg>Apoios nodais</label></div>
<ul class="tree">
<li class="more"><div class="row"><label><input type="radio" name="a" checked><svg><use href="#supp"/></svg>Local</label></div></li>
</ul></li>
</ul></li>
</ul>
<div class="scroll"><button class="up" aria-label="Deslocar para cima"><svg class="s9"><path d="M1 7l4-4 4 4" fill="none" stroke="#444" stroke-width="2"/></svg></button><span class="thumb"></span></div>
</div>
</section>

<div class="side">
<section class="view">
<svg class="scene" width="886" height="651" viewBox="362 79 886 651" role="img" aria-label="Modelo deformado">
<path d="M461 132l787 116M362 283l181-203" stroke="#0b6b6b" stroke-width="1.300"/>
<path d="M362 654l518 76" stroke="#303030"/>
<g stroke="#000" stroke-width="1">
<path d="M473 134l20 3v9l-24-1z" fill="#0e0"/>
<path d="M469 145l24 1v13l-28-3z" fill="#ff0"/>
<path d="M465 156l28 3v12l-32-2z" fill="#cdc800"/>
<path d="M461 169l32 2v12h-35z" fill="#ffa500"/>
<path d="M458 183h35v17l-39 3z" fill="#f00"/>
<path d="M454 203l39-3v88l-39-4q-6-40 0-81z" fill="#bd0000"/>
<path d="M454 284l39 4v26l-35-3z" fill="#f00"/>
<path d="M458 311l35 3v20l-32-3z" fill="#ffa500"/>
<path d="M461 331l32 3v18l-28-2z" fill="#cdc800"/>
<path d="M465 350l28 2v18l-23-2z" fill="#ff0"/>
<path d="M470 368l23 2v17l-20-1z" fill="#0e0"/>
<path d="M473 386l20 1v17h-16z" fill="#00e48c"/>
<path d="M477 404h16v17h-12z" fill="#00f2f2"/>
<path d="M481 421h12v18l-8-1z" fill="#0096ff"/>
<path d="M485 438l8 1v18h-4z" fill="#00f"/>
<path d="M489 457h4v20z" fill="#0000a0"/>
</g>
<path d="M493 137l133 18v339l-133-17z" fill="#969696"/>
<g>
<path d="M493 137l116 17-9 7-40-9-67-6z" fill="#90cf92"/>
<path d="M493 146l67 5 42 8-5 13-37-9-67-4z" fill="#d3cf92"/>
<path d="M493 159l67 3 20-1 17 11-32-5-72 4z" fill="#c9c48e"/>
<path d="M493 171l72-4 32 5-6 12-26-8-72 7z" fill="#d4b78f"/>
<path d="M493 183l72-7 26 7q-8 45-4 98l6 33H493z" fill="#d39292"/>
<path d="M493 200l62-9q16 2 31 15-4 38 1 75-48 16-94 7z" fill="#c88f90"/>
<path d="M493 314h100l1 23-54 1-47-4z" fill="#d4bd90"/>
<path d="M493 334l47 3h54l4 21-68-2-37-4z" fill="#c9c690"/>
<path d="M493 352l37 4 68 2 3 17-108-5z" fill="#d3d092"/>
<path d="M493 370l108 5 5 18-113-6z" fill="#92d294"/>
<path d="M493 387l113 6 2 10-115-7z" fill="#92cdb8"/>
<path d="M493 396l115 7 1 8-116-7z" fill="#00e48c"/>
<path d="M493 404l116 7 4 17-120-7z" fill="#00f2f2"/>
<path d="M493 421l120 7 4 19-124-8z" fill="#0096ff"/>
<path d="M493 439l124 8 5 21-129-11z" fill="#00f"/>
<path d="M493 457l129 11 4 26-133-17z" fill="#0000a0"/>
</g>
<path d="M493 146l67 5 40 7M493 159l67 3 20-1 17 10M493 171l72-4 30 6M493 334l47 4h54M493 352l37 4 68 2M493 370l108 5M493 387l113 6M493 404l116 7M493 421l120 7M493 439l124 8M493 457l129 11M520 143l85 16" fill="none" stroke="#101010" stroke-width="1"/>
<path d="M493 183l72-7 25 6M493 200l62-9q16 2 31 15M493 288q46 9 93-7M493 314h98" fill="none" stroke="#444" stroke-dasharray="1 2" stroke-width="1"/>
<path d="M565 146l50 9-12 1z" fill="#20d8d0"/>
<path d="M505 139v339M517 141v339M529 142v339M541 144v339M553 145v340" stroke="#4a8282" stroke-opacity=".55" stroke-width="2"/>
<path d="M565 147v339M577 148v339M589 150v339M601 152v339M613 153v339" stroke="#0a7f7f"/>
<path d="M493 148l133 17M493 159l133 17M493 170l133 17M493 182l133 17M493 193l133 17M493 204l133 17M493 216l133 17M493 227l133 17M493 238l133 17M493 250l133 17M493 261l133 17M493 272l133 17M493 284l133 17M493 295l133 17M493 306l133 17M493 318l133 17M493 329l133 17M493 340l133 17M493 352l133 17M493 363l133 17M493 374l133 17M493 386l133 17M493 397l133 17M493 408l133 17M493 420l133 17M493 431l133 17M493 442l133 17M493 454l133 17M493 465l133 17" stroke="#0c7c7c" stroke-width="1"/>
<path d="M493 137v340M626 155v339M493 137l133 18" stroke="#f4f4f4" stroke-width="1.500" fill="none"/>
<path d="M493 477l133 17" stroke="#00d000"/>
<path d="M526 480v7M523 483h6M592 489v7M589 492h6" stroke="#0a9a0a" stroke-width="2"/>
<path d="M491 135h3v3h-3zM625 153h3v3h-3zM491 475h3v3h-3zM624 492h4v4h-4z" fill="#f00"/>
<path d="M516 139l16-20M559 145l17-20M605 152l15-21" stroke="#9bb4e4" stroke-width="1.500"/>
<g fill="#a8c0ee"><circle cx="532" cy="119" r="2"/><circle cx="576" cy="125" r="2"/><circle cx="620" cy="131" r="2"/><circle cx="619" cy="160" r="2.500" fill="#b8d8b8"/></g>
<path d="M600.500 164.500h12v12h-12zM613 165l6-5" fill="none" stroke="#b8d8b8"/>
<path d="M522 242l43 7" stroke="#c0d840"/><circle cx="522" cy="242" r="2" fill="#ff0"/>
<g class="lbl">
<g fill="#000"><path d="M542 138h9v14h-9zM628 139h12v13h-12zM484 334h18v15h-18zM558 315h20v14h-20zM617 352h18v15h-18zM496 460h18v14h-18zM629 477h20v14h-20zM530 476h8v13h-8zM565 481h18v13h-18z"/></g>
<text x="498" y="133" fill="#f00" class="bold">9</text>
<text x="544" y="149" fill="#0ff">7</text><text x="631" y="149" fill="#f00" class="bold">8</text>
<text x="485" y="345" fill="#0ff">434</text><text x="618" y="363" fill="#0ff">435</text>
<text x="559" y="325" fill="#0f0" class="narrow">F151</text>
<text x="497" y="471" fill="#f00" class="bold">311</text><text x="631" y="488" fill="#f00" class="bold">308</text>
<text x="531" y="486" fill="#0ff">2</text><text x="566" y="491" fill="#0ff">565</text>
<text x="485" y="245" fill="#ff0" class="narrow">0.03294</text>
</g>
<path d="M418 610l-29-4" stroke="#0c0" stroke-width="2"/><path d="M379 604l11-3v6z" fill="#0a900a"/>
<path d="M418 610l-9 10" stroke="#e00000" stroke-width="2"/><path d="M404 625l2-8 5 5z" fill="#d00000"/>
<path d="M418 610v27" stroke="#0ff" stroke-width="2"/><path d="M418 648l-3-11h6z" fill="#00b0b0"/>
<g class="val"><text x="368" y="607" fill="#0e0">Y</text><text x="398" y="633" fill="#e00">X</text><text x="415" y="660" fill="#0ff">Z</text></g>
<path d="M493 601l133 17v-40l-13 18-12 12-11 7-13 7-12 3-12 3-12 2-12 3-12 5-12 8-12 15z" fill="#082a08" stroke="#0d0"/>
<path d="M493 661v-58M505 646v-42M517 638v-32M529 633v-25M541 630v-21M553 628v-17M565 625v-13M577 622v-10M601 608v6M613 597v14M626 578v36" stroke="#0c0" stroke-width="1.500"/>
<path d="M493 601l3 8h-6zM505 603l3 8h-6zM517 604l3 8h-6zM529 606l3 8h-6zM541 607l3 8h-6zM553 609l3 8h-6zM565 611l3 7h-6zM613 616l-3-8h6zM626 618l-3-8h6z" fill="#0d0"/>
<g class="val" fill="#0e0"><text x="613" y="570">-93.56</text><text x="601" y="587">-49.07</text><text x="590" y="600">-15.28</text><text x="579" y="632">+6.77</text><text x="564" y="637">+22.50</text><text x="551" y="641">+34.94</text><text x="539" y="644">+45.87</text><text x="528" y="646">+55.87</text><text x="516" y="649">+66.88</text><text x="504" y="654">+80.47</text><text x="492" y="662">+102.37</text><text x="478" y="678">+143.60</text></g>
<path d="M650 106h1v1h-1zM641 266h1v1h-1zM926 93h1v1h-1zM1201 80h1v1h-1zM441 344h1v1h-1zM473 456h1v1h-1zM599 313h1v1h-1zM632 425h1v1h-1zM688 545h1v1h-1zM506 568h1v1h-1zM464 615h1v1h-1zM539 680h1v1h-1zM655 697h1v1h-1zM422 662h1v1h-1zM389 550h1v1h-1zM703 168h1v1h-1zM1040 290h1v1h-1zM1098 143h1v1h-1zM1138 306h1v1h-1zM1188 402h1v1h-1zM1013 474h1v1h-1zM1066 596h1v1h-1zM1158 535h1v1h-1zM1209 659h1v1h-1zM737 602h1v1h-1zM769 455h1v1h-1zM1085 703h1v1h-1zM762 329h1v1h-1zM1215 207h1v1h-1zM820 706h1v1h-1z" fill="#ccc"/>
</svg>
<div class="hud top"><p>Modo de visibilid.</p><p>Deformações globais u-Y [mm]</p><p>Reações do apoio [kN], [kNm]</p><p>CC1 : Peso próprio</p></div>
<div class="hud bottom"><p>Max u-Y: 0.03294, Min u-Y: 0.00000 mm</p><p>Max p-z': 143.60, Min p-z': -93.56 kN/m</p></div>

<aside class="panel">
<header class="ptitle"><h2>Painel</h2><button class="plain" aria-label="Fechar painel"><svg class="s9"><path d="M1 1l7 7M8 1L1 8" stroke="#777" stroke-width="1.300"/></svg></button></header>
<div class="pbody">
<p class="cap">Fatores de repres.</p>
<div class="grp"><label for="f1">Deformação:</label><div class="spin"><input id="f1" type="text" value="11200"><span class="ud"><button aria-label="Aumentar"></button><button aria-label="Diminuir"></button></span></div></div>
<div class="grp"><label for="f2">Diagramas de barras:</label><div class="spin off"><input id="f2" type="text" disabled><span class="ud"><button aria-label="Aumentar" disabled></button><button aria-label="Diminuir" disabled></button></span></div></div>
<div class="grp"><label for="f3">Diagramas de superfícies:</label><div class="spin off"><input id="f3" type="text" disabled><span class="ud"><button aria-label="Aumentar" disabled></button><button aria-label="Diminuir" disabled></button></span></div></div>
<div class="grp"><label for="f4">Diagramas de secções:</label><div class="spin off"><input id="f4" type="text" disabled><span class="ud"><button aria-label="Aumentar" disabled></button><button aria-label="Diminuir" disabled></button></span></div></div>
<div class="grp"><label for="f5">Forças de reação:</label><div class="spin"><input id="f5" type="text" value="0.125"><span class="ud"><button aria-label="Aumentar"></button><button aria-label="Diminuir"></button></span></div></div>
<div class="grp"><label for="f6">Trajetórias:</label><div class="spin off"><input id="f6" type="text" disabled><span class="ud"><button aria-label="Aumentar" disabled></button><button aria-label="Diminuir" disabled></button></span></div></div>
<div class="grp inc"><label><input type="checkbox" disabled>Incrementos:</label><div class="spin off"><span class="pick"><select aria-label="Incrementos" disabled><option></option></select><svg class="s9"><path d="M0 3l4 4 4-4" fill="none" stroke="#aaa" stroke-width="1.300"/></svg></span><span class="ud"><button aria-label="Aumentar" disabled></button><button aria-label="Diminuir" disabled></button></span></div></div>
<div class="acts">
<button aria-label="Editar"><svg><path d="M1.500 2.500h11v13h-11z" fill="#fff" stroke="#555"/><path d="M3 6h7M3 8h6M3 10h5M3 12h7" stroke="#888"/><path d="M7 11l1-3 6-8 2 2-6 8z" fill="#f4c820" stroke="#444" stroke-width=".7"/></svg></button>
<button aria-label="Copiar"><svg><path d="M0 2q4-3 7 0v8q-4 3-7 0z" fill="#8c7c70" stroke="#554"/><path d="M2 3v7" stroke="#e8e0d8" stroke-width="1.500"/><path d="M9 2q4-1 5 4" fill="none" stroke="#555" stroke-width="2"/><path d="M8.500 6.500h7v9h-7z" fill="#fff" stroke="#666"/><path d="M10 9h4M10 11h4M10 13h4" stroke="#888"/></svg></button>
<button class="end" aria-label="Desbloquear"><svg><path d="M4 7V4q0-3 4-3 3 0 4 3v4" fill="none" stroke="#666" stroke-width="1.500"/><path d="M3.500 8.500h11v7h-11z" fill="#6c90f0" stroke="#2840a8"/></svg></button>
</div>
</div>
<footer class="ptabs"><button class="sel" aria-label="Fatores"><svg><path d="M8 1v12M2 4h12M4 14h8" stroke="#6a5208" stroke-width="1.500"/><path d="M3 4L1 10h5zM13 4l-3 6h5z" fill="#fff" stroke="#907010"/><path d="M0 10h7q-3 4-7 0zM9 10h7q-3 4-7 0z" fill="#d0b030" stroke="#6a5208" stroke-width=".5"/></svg></button>
<button aria-label="Filtro"><svg><path d="M3 13h11v2H1zM12 1L6 8" stroke="#222" stroke-width="2.500" fill="#222"/><path d="M10 5q4 4 1 9M3 10h6" fill="none" stroke="#333" stroke-width="2"/></svg></button></footer>
<svg class="pointer" aria-hidden="true"><path class="soft" d="M64 9L22 41" stroke="#000" stroke-opacity=".4" stroke-width="4"/><path class="soft" d="M5 53l22-4-9-11z" fill-opacity=".4"/><path d="M61 2L16 37" stroke="#c00000" stroke-width="4"/><path d="M1 49l10-20 11 16z" fill="#c00000"/></svg>
</aside>
</section>

<section class="results">
<header class="title"><h2>4.2 Nós - deformações</h2></header>
<div class="bar sheetbar">
<button class="t" aria-label="Editar"><svg><use href="#grid"/><path d="M3 14h12V3z" fill="#80c860" stroke="#207020"/></svg></button>
<button class="t" aria-label="Valores"><svg><use href="#grid"/><use href="#down" x="5" y="4"/><path d="M9 9h6M12 6v6" stroke="#2b4a90" stroke-width="2"/></svg></button>
<button class="t" aria-label="Cargas"><svg><use href="#grid"/><use href="#down" x="8" y="4"/></svg></button>
<button class="t on" aria-label="Resultados"><svg><use href="#grid"/><path d="M0 10h16" stroke="#333"/><path d="M8 10l8-5v5z" fill="#e01818"/><path d="M0 10v5l8-5z" fill="#1515e0"/></svg></button>
<button class="t faded" aria-label="Curva"><svg><use href="#grid"/><path d="M1 10l3-4 3 7 3-8 3 8 2-4" fill="none" stroke="#e03030" stroke-width="1.300"/></svg></button>
<i class="sep"></i>
<button class="t" aria-label="Tabela anterior"><svg><use href="#grid"/><path d="M1 9l5-4v2h8v4H6v2z" fill="#5c8fe0" stroke="#234888"/></svg></button>
<button class="t" aria-label="Tabela seguinte"><svg><use href="#grid"/><path d="M15 9l-5-4v2H2v4h8v2z" fill="#5c8fe0" stroke="#234888"/></svg></button>
<i class="sep"></i>
<button class="t" aria-label="Sair"><svg><path d="M3 2h6V0l1 1M3 5l4-4v3q7 0 6 6-1 4-5 5 4-4 2-7-1-1-3-1v2z" fill="#4468a8" stroke="#223" stroke-width=".7"/></svg></button>
<button class="t on" aria-label="Entrar"><svg><path d="M12 1Q2 2 4 9H1l5 5 5-5H8q-1-4 6-5z" fill="#3f6bc0" stroke="#223" stroke-width=".8"/><path d="M11 10q2 1 2 4H8" fill="none" stroke="#446" stroke-width="1.500"/></svg></button>
<i class="sep"></i>
<button class="t" aria-label="Linhas"><svg><path d="M0 1h16v14H0z" fill="#e8e8f4"/><path d="M0 2.500h16M0 7.500h16M0 12.500h16" stroke="#6c76b8" stroke-width="2.500"/><path d="M0 5.500h16M0 10.500h16M5 1v14M10.500 1v14" stroke="#aab"/></svg></button>
<button class="t faded" aria-label="Colorir"><svg><use href="#grid"/><path d="M7 15l6-9v-4l3 3-5 10z" fill="#e8d848" stroke="#886"/></svg></button>
<i class="sep"></i>
<span class="combo low"><select aria-label="Caso de carga da tabela"><option>CC1 - Peso próprio</option></select></span>
<i class="sep"></i>
<button class="t" aria-label="Caso anterior"><svg><use href="#prev"/></svg></button>
<button class="t" aria-label="Caso seguinte"><svg><use href="#next"/></svg></button>
<i class="sep"></i>
<button class="t" aria-label="Filtrar"><svg><path d="M1 4h12l-5 5v6l-2-2V9z" fill="#5c8fe0" stroke="#234888"/><path d="M8.500 .5h7v5h-7z" fill="#fff" stroke="#345"/><path d="M8 0h8v2H8z" fill="#345"/></svg></button>
<i class="sep"></i>
<button class="t faded" aria-label="Informação"><svg><circle cx="11" cy="5" r="4.500" fill="#667"/><path d="M11 3v5" stroke="#fff" stroke-width="2"/><path d="M0 15l3-6 3-1 2 2-1 3z" fill="#bbc" stroke="#556"/></svg></button>
<i class="sep"></i>
<button class="t on" aria-label="Barras nas células"><svg><path d="M1 0v15.500h15" fill="none" stroke="#222"/><path d="M1 1.500h5v3H1zM1 8.500h8v3H1z" fill="#f4b060" stroke="#733" stroke-width=".8"/><path d="M1 5h8v3H1zM1 12h12v3H1z" fill="#f8dc80" stroke="#733" stroke-width=".8"/></svg></button>
<i class="sep"></i>
<button class="t" aria-label="Exportar"><svg><path d="M.5 .5h15v15H.5z" fill="#f4fff4" stroke="#1b7a2c"/><path d="M4 4l8 8M12 4l-8 8" stroke="#1f8434" stroke-width="3"/></svg></button>
<i class="sep"></i>
<button class="t" aria-label="Calculadora"><svg><path d="M1 3h14v11H1z" fill="#555" stroke="#333"/><path d="M3 4h10v2H3z" fill="#cde"/><path d="M3 8h10M3 10h10M3 12h10" stroke="#eee" stroke-dasharray="1.500 1.300"/></svg></button>
</div>
<div class="sheet">
<table>
<colgroup><col class="n"><col class="v"><col class="v"><col class="v"><col class="v"><col class="v"><col class="v"><col class="v"><col></colgroup>
<thead>
<tr class="letters"><th rowspan="3" class="no">Nó<br>nº</th><th class="cur">A</th><th>B</th><th>C</th><th>D</th><th>E</th><th>F</th><th>G</th><th class="fill"></th></tr>
<tr class="units"><th colspan="4">Deslocamentos [mm]</th><th colspan="3">Rotações [mrad]</th><th class="fill" rowspan="2"></th></tr>
<tr class="syms"><th>|u|</th><th>u<sub>X</sub></th><th>u<sub>Y</sub></th><th class="edge">u<sub>Z</sub></th><th class="edge">φ<sub>X</sub></th><th class="edge">φ<sub>Y</sub></th><th class="edge">φ<sub>Z</sub></th></tr>
</thead>
<tbody>
<tr><th class="cur">1</th><td class="a">0.00532</td><td class="b"><i class="neg" style="width:7px"></i>-0.00230</td><td class="a"><i class="neg" style="width:2px"></i>-0.00088</td><td class="a">0.00471</td><td class="e">0.0</td><td class="f">0.0</td><td class="g">0.0</td><td class="fill"></td></tr>
<tr><th>2</th><td class="a">0.00740</td><td class="b"><i class="neg" style="width:5px"></i>-0.00166</td><td class="a"><i class="pos" style="width:1px"></i>0.00109</td><td class="a">0.00713</td><td class="e">0.0</td><td class="f">0.0</td><td class="g">0.0</td><td class="fill"></td></tr>
<tr><th>3</th><td class="a">0.01026</td><td class="b"><i class="neg" style="width:6px"></i>-0.00223</td><td class="a"><i class="pos" style="width:6px"></i>0.00470</td><td class="a">0.00884</td><td class="e">0.0</td><td class="f">0.0</td><td class="g">0.0</td><td class="fill"></td></tr>
<tr><th>4</th><td class="a">0.01582</td><td class="b">-0.00003</td><td class="a"><i class="pos" style="width:23px"></i>0.01489</td><td class="a">0.00534</td><td class="e">0.0</td><td class="f">0.0</td><td class="g">0.0</td><td class="fill"></td></tr>
<tr><th>5</th><td class="a">0.01986</td><td class="b">-0.00308</td><td class="a"><i class="pos" style="width:24px"></i>0.01884</td><td class="a">0.00515</td><td class="e">0.0</td><td class="f">0.0</td><td class="g">0.0</td><td class="fill"></td></tr>
</tbody>
</table>
</div>
</section>
</div>
</main>
</body>
</html>
```
FILE: styles.css
```css
*, *::before, *::after { box-sizing: border-box; }
body {
  margin: 0;
  height: 100vh;
  display: flex;
  flex-direction: column;
  overflow: hidden;
  background: #d0d5de;
  font: 11px/18px "Open Sans", "Noto Sans", sans-serif;
  color: #000;
}
h2, p, ul { margin: 0; padding: 0; }
h2 { font: inherit; }
button { border: 0; background: none; padding: 0; margin: 0; font: inherit; }
svg { width: 16px; height: 16px; overflow: visible; display: block; flex: none; }
.defs { width: 0; height: 0; position: absolute; }
.s9 { width: 9px; height: 9px; }
.ti { font: bold 7px "Liberation Serif", serif; }
.tn { font: bold 8px "Liberation Sans", sans-serif; }
.ax { font: 10px "Liberation Serif", serif; }

/* menu */
.menubar {
  flex: 0 0 26px;
  display: flex;
  align-items: center;
  gap: 15px;
  padding-left: 10px;
  border-top: 1px solid #fff;
  background: #d0d5de;
}
.logo { width: 17px; height: 13px; margin-right: -6px; }
.menubar a { color: #3b424c; text-decoration: none; white-space: nowrap; }

/* toolbars */
.toolrow {
  flex: 0 0 26px;
  display: flex;
  border-bottom: 1px solid #a4a9b3;
  background: linear-gradient(#eceff6, #d4d8e2);
}
.toolrow.wide { flex-basis: 25px; }
.bar { --sep: 7px; display: flex; align-items: center; flex: none; position: relative; padding-left: 9px; }
.wide .bar { --sep: 8px; }
.bar + .bar { padding-left: 12px; }
.bar + .tight { padding-left: 8px; }
.tight + .last { padding-left: 10px; }
.toolrow .bar::before {
  content: "";
  align-self: center;
  width: 2px;
  height: 16px;
  margin: 0 3px 0 -5px;
  background: repeating-linear-gradient(#a8aeba 0 2px, transparent 2px 4px);
}
.t { width: 22px; height: 22px; flex: none; display: grid; place-items: center; }
.t.slim { width: 20px; }
.t.on { border: 1px solid #b49a60; border-radius: 2px; background: linear-gradient(#fbd0a0, #fdb65a 45%, #ffe49a); }
.faded svg { opacity: .5; }
.sep { flex: none; width: var(--sep); height: 16px; background: linear-gradient(#a8adb8, #a8adb8) center / 1px 100% no-repeat; }
.gap2 { width: 2px; }
.c { width: 14px; height: 22px; flex: none; display: grid; place-items: center; }
.c::before { content: ""; border: 3px solid transparent; border-top-color: #777d88; border-bottom: 0; }
.combo { position: relative; display: flex; margin: 0 3px 0 2px; width: 216px; height: 19px; background: #fff; }
.combo select { appearance: none; width: 100%; border: 0; padding: 0 20px 0 4px; background: #fff; color: #000; font: inherit; }
.combo::after {
  content: "";
  position: absolute;
  right: 1px; top: 1px;
  width: 13px; height: 17px;
  background: linear-gradient(#e8ebf2, #d4d8e2);
}
.combo::before {
  content: "";
  position: absolute;
  z-index: 1;
  right: 5px; top: 8px;
  border: 3px solid transparent;
  border-top-color: #666c78;
  border-bottom: 0;
}

/* work area */
.work { flex: 1; min-height: 0; display: flex; border-top: 1px solid #8b8f98; }
.title {
  flex: 0 0 19px;
  display: flex;
  align-items: center;
  gap: 8px;
  padding: 0 5px 0 4px;
  background: #b9c0cb;
  color: #3a414c;
}
.title h2 { flex: 1; }
.plain { display: grid; place-items: center; width: 9px; height: 16px; }
.navigator { flex: 0 0 357px; display: flex; flex-direction: column; border-right: 1px solid #9aa2b0; background: #e9edf5; }
.treebox { flex: 1; min-height: 0; display: flex; margin: 1px 3px 0; border-top: 1px solid #8f96a2; overflow: hidden; background: #fbfbf3; }
.root { flex: 1; padding: 1px 0 0 6px; }
.tree { list-style: none; }
.tree .tree { padding-left: 19px; }
.tree li { position: relative; }
.tree li::before {
  content: "";
  position: absolute;
  left: 5px; top: 0; bottom: 0;
  border-left: 1px dotted #777;
}
.tree li:last-child::before { bottom: auto; height: 10px; }
.tree li.more::before { bottom: 0; height: auto; }
.root > li:first-child::before { top: 10px; }
.row { position: relative; display: flex; align-items: center; height: 18px; padding-left: 18px; }
.row::before { content: ""; position: absolute; left: 6px; top: 10px; width: 11px; border-top: 1px dotted #777; }
.row label { display: flex; align-items: center; white-space: nowrap; }
.row label svg { margin: 0 5px 0 2px; }
.row sub, .syms sub { font-size: 10px; line-height: 1; vertical-align: baseline; align-self: flex-end; padding-bottom: 3px; }
.row input { appearance: none; position: relative; flex: none; width: 13px; height: 13px; margin: 0; border: 1px solid #444; background: linear-gradient(135deg, #d4d9e2, #fff); }
.row input[type="radio"] { border-radius: 50%; border-color: #555; }
.row input[type="radio"]:checked { background: radial-gradient(#111 0 2px, #eef1f6 3px); }
.row input[type="checkbox"]:checked::before {
  content: "";
  position: absolute;
  left: 4px; top: 1px;
  width: 4px; height: 7px;
  border: solid #111;
  border-width: 0 2px 2px 0;
  transform: rotate(42deg);
}
.row input.mixed { background: linear-gradient(#999, #999) center / 7px 7px no-repeat, #e9ecf2; }
.tg {
  position: absolute;
  z-index: 1;
  left: 1px; top: 6px;
  width: 9px; height: 9px;
  border: 1px solid #9a9a9a;
  background: linear-gradient(#3150a0, #3150a0) center / 5px 1px no-repeat, #f4f4f4;
}
.tg.plus { background: linear-gradient(#3150a0, #3150a0) center / 5px 1px no-repeat, linear-gradient(#3150a0, #3150a0) center / 1px 5px no-repeat, #f4f4f4; }
.marked::after { content: ""; position: absolute; z-index: 2; left: 0; top: -4px; width: 82px; height: 26px; border: 4px solid #c00000; }
.scroll { flex: 0 0 16px; background: #f0f0f0; display: flex; flex-direction: column; }
.up { height: 17px; display: grid; place-items: center; }
.thumb { height: 718px; margin-right: 1px; background: #cdcdcd; }

.side { flex: 1; min-width: 0; display: flex; flex-direction: column; gap: 5px; padding-left: 4px; }
.view { flex: 1; min-height: 0; position: relative; overflow: hidden; background: #0a0a0a; border: 1px solid #70757e; border-right: 0; }
.scene { position: absolute; left: 0; top: 0; width: 886px; height: 651px; }
.lbl { font: 10px "Liberation Sans", sans-serif; }
.lbl .narrow { font-size: 9px; }
.lbl .bold { font-weight: bold; }
.val { font: 9px "Liberation Sans", sans-serif; }
.hud { position: absolute; left: 3px; color: #fff; font: 11px/14px "Liberation Sans", sans-serif; }
.hud p { width: max-content; padding: 0 3px; }
.hud.top { top: 6px; }
.hud.top p { background: #000; }
.hud.bottom { bottom: 6px; left: 2px; }

/* floating panel */
.panel {
  position: absolute;
  left: 454px; top: 56px;
  width: 164px;
  padding: 4px;
  border: 1px solid #fff;
  background: #e6eaf2;
  outline: 4px solid #000;
  line-height: 14px;
}
.ptitle { display: flex; align-items: center; justify-content: space-between; height: 23px; padding: 0 2px 0 1px; background: #b9c0cb; color: #444a54; font-weight: bold; }
.pbody { padding: 5px 3px 18px 4px; border: 1px solid #a4adbb; border-bottom-color: #777; background: #efefef; }
.cap { height: 19px; padding-top: 1px; }
.grp { display: flex; flex-direction: column; gap: 3px; height: 46px; margin-bottom: 9px; padding: 4px 0 0 2px; border-right: 1px solid #a9a9ee; border-bottom: 1px solid #a9a9ee; background: #f6f6f6; white-space: nowrap; }
.spin { display: flex; width: 68px; height: 20px; border: 1px solid #777; background: #fff; }
.spin input { flex: 1; min-width: 0; border: 0; padding: 0 5px 0 0; text-align: right; background: transparent; font: inherit; color: #000; }
.ud { flex: 0 0 16px; display: flex; flex-direction: column; background: #f0f0f0; }
.ud button { flex: 1; display: grid; place-items: center; border: 1px solid #c4c4c4; }
.ud button::before { content: ""; border: 3px solid transparent; border-bottom-color: #000; border-top: 0; }
.ud button:last-child::before { border-top: 3px solid #000; border-bottom: 0; }
.off { border-color: #b8b8b8; background: #f0f0f0; }
.off .ud button::before { opacity: .6; }
.inc { color: #777; }
.inc label { display: flex; align-items: center; gap: 3px; }
.inc input { appearance: none; width: 13px; height: 13px; margin: 0; border: 1px solid #bbb; background: #fff; }
.inc .spin { width: 106px; border: 0; background: none; gap: 1px; }
.pick { position: relative; flex: 1; display: flex; align-items: center; border: 1px solid #bbb; padding-right: 4px; background: #fff; }
.pick select { appearance: none; flex: 1; align-self: stretch; margin: 1px 4px 1px 1px; min-width: 0; border: 0; background: #eee; }
.acts { display: flex; gap: 5px; margin-top: 20px; padding-right: 3px; }
.acts button { width: 25px; height: 21px; display: grid; place-items: center; border: 1px solid #aaa; background: #e6e6e6; }
.acts .end { margin-left: auto; }
.ptabs { display: flex; gap: 6px; height: 23px; padding-left: 3px; background: #d0d5de; }
.ptabs button { width: 24px; height: 20px; display: grid; place-items: center; }
.ptabs .sel { background: #f0f3f6; border-radius: 0 0 3px 3px; outline: 1px solid #bfe4ec; }
.pointer { position: absolute; left: 84px; top: 21px; width: 64px; height: 52px; }
.soft { filter: blur(1px); }

/* results table */
.results { flex: 0 0 165px; min-width: 0; display: flex; flex-direction: column; border-left: 1px solid #8b93a0; background: #d4d8e2; overflow: hidden; }
.results .title { flex-basis: 20px; padding-left: 3px; border-top: 1px solid #dfe4ec; }
.sheetbar { --sep: 8px; flex: 0 0 27px; padding-left: 8px; background: linear-gradient(#eceff6, #d4d8e2); }
.combo.low { width: 197px; margin: 0 1px; }
.sheet { flex: 1; min-height: 0; margin-left: 2px; border-top: 1px solid #777; border-left: 1px solid #777; background: #f0f0f0; overflow: hidden; font: 11px/15px "Liberation Sans", sans-serif; }
table { width: 100%; border-collapse: separate; border-spacing: 0; table-layout: fixed; }
.n { width: 45px; }
.v { width: 78px; }
th, td { height: 16px; padding: 0; font-weight: normal; border-right: 1px solid #999; border-bottom: 1px solid #999; }
th { background: #f0f0f0; }
.letters th { height: 14px; line-height: 13px; background: #e6e6e6; border-color: #777; }
.letters .no { background: #f0f0f0; line-height: 15px; }
.letters .cur, tbody .cur { background: #3399ff; color: #fff; }
.units th { height: 16px; border-bottom: 0; }
.syms th { height: 18px; border-right: 0; border-bottom-color: #777; }
.syms .edge { border-right: 1px solid #aaa; }
tbody th { border-color: #777; }
td { position: relative; z-index: 0; text-align: right; padding-right: 4px; background: #fff; }
tr:nth-child(even) td { background: #f7f9ff; }
tr .fill.fill { background: #f0f0f0; border-right: 0; }
td:nth-last-child(n+2)::before { content: ""; position: absolute; top: 3px; bottom: 3px; left: 5px; width: 1px; background: #b4b4b4; }
td.b::before { display: none; }
td.e::before { left: 33px; }
td.f::before { left: 36px; }
td.g::before { left: 50px; }
td i { position: absolute; z-index: -1; top: 2px; bottom: 2px; left: 5px; }
.b i { left: auto; right: 17px; }
.neg { background: #ffc4c4; }
.pos { background: #dbe6ff; }
```
